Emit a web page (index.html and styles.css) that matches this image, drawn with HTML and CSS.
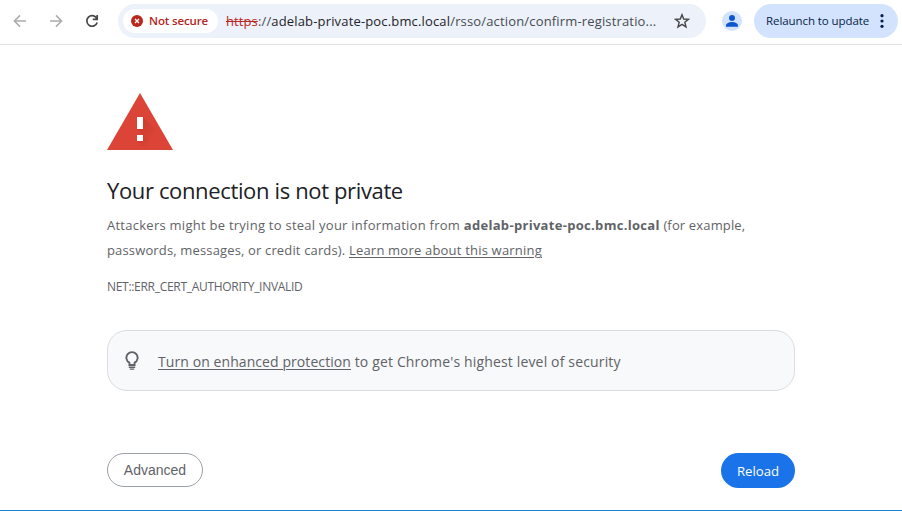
FILE: index.html
```html
<!DOCTYPE html>
<html lang="en">
<head>
<meta charset="utf-8">
<title>Privacy error</title>
<link rel="stylesheet" href="styles.css">
</head>
<body>
<header class="toolbar">
  <nav class="nav">
    <svg class="nav-icon muted" viewBox="0 0 16 16"><path d="M14 8H2.6M8 2.4 2.4 8 8 13.6"/></svg>
    <svg class="nav-icon muted" viewBox="0 0 16 16"><path d="M2 8h11.4M8 2.4 13.6 8 8 13.6"/></svg>
    <svg class="nav-icon" viewBox="0 0 16 16"><path d="M12.7 5.2A5.3 5.3 0 1 0 13.2 9.5M13.2 1.9v4.4H8.8"/></svg>
  </nav>
  <div class="omnibox">
    <span class="chip">
      <svg class="chip-icon" viewBox="0 0 12 12"><circle cx="6" cy="6" r="6"/><path d="m4 4 4 4M8 4 4 8"/></svg>
      <span>Not secure</span>
    </span>
    <span class="url"><span class="scheme">https</span><span class="rest">://<span class="host">adelab-private-poc.bmc.local</span>/rsso/action/confirm-registratio...</span></span>
    <svg class="star" viewBox="0 0 16 16"><path d="m8 1.7 1.7 4.3 4.7.3-3.6 3 1.2 4.6L8 11.4l-4 2.5 1.2-4.6-3.6-3 4.7-.3z"/></svg>
  </div>
  <span class="avatar"><svg viewBox="0 0 20 20"><circle cx="10" cy="7" r="3"/><path d="M4 15.8v-1.3c0-2.3 3.2-3.5 6-3.5s6 1.2 6 3.5v1.3z"/></svg></span>
  <button class="relaunch"><span>Relaunch to update</span>
    <svg viewBox="0 0 4 14"><circle cx="2" cy="1.7" r="1.6"/><circle cx="2" cy="7" r="1.6"/><circle cx="2" cy="12.3" r="1.6"/></svg>
  </button>
</header>
<main class="page">
  <svg class="warning" viewBox="0 0 66 57">
    <defs>
      <linearGradient id="shade" x1="0" y1="0" x2="1" y2="1"><stop offset="0" stop-color="#a52714" stop-opacity=".38"/><stop offset=".6" stop-color="#a52714" stop-opacity="0"/></linearGradient>
      <clipPath id="tri"><path d="M33 0 66 57H0z"/></clipPath>
    </defs>
    <path fill="#db4437" d="M33 0 66 57H0z"/>
    <g clip-path="url(#tri)" fill="url(#shade)"><path d="m36 24 22 22v11H51L30 36z"/><path d="m36 42 15 15H39l-9-9z"/></g>
    <path fill="#fff" d="M30 24h6v12h-6zM30 42h6v6h-6z"/>
  </svg>
  <h1>Your connection is not private</h1>
  <p class="message"><span class="lead">Attackers might be trying to steal your information from</span> <strong>adelab-private-poc.bmc.local</strong> <span class="aside">(for example,</span><br><span class="aside">passwords, messages, or credit cards).</span> <a href="#">Learn more about this warning</a></p>
  <p class="code">NET::ERR_CERT_AUTHORITY_INVALID</p>
  <section class="tip">
    <svg viewBox="0 0 14 20"><path class="bulb" d="M4.4 14v-2.3A5.6 5.6 0 1 1 9.6 11.7v2.3z"/><path class="base" d="M3.8 15.6h6.4v1.3H3.8zM4.8 17.6h4.4v1.2H4.8z"/></svg>
    <p><a href="#">Turn on enhanced protection</a> <span>to get Chrome's highest level of security</span></p>
  </section>
  <div class="actions">
    <button class="advanced">Advanced</button>
    <button class="reload">Reload</button>
  </div>
</main>
</body>
</html>
```
FILE: styles.css
```css
* { box-sizing: border-box; }

body {
  margin: 0;
  height: 511px;
  display: flex;
  flex-direction: column;
  overflow: hidden;
  background: #fff;
  border-bottom: 1px solid #1583d0;
  font-family: "Open Sans", sans-serif;
  color: #5f6368;
}

button { border: 0; padding: 0; font-family: inherit; }
h1, p { margin: 0; white-space: nowrap; }
svg { display: block; flex: none; }
a { color: inherit; text-underline-offset: 2px; text-decoration-thickness: 1px; }

.toolbar {
  height: 45px;
  flex: none;
  display: flex;
  align-items: center;
  padding: 0 4px 3px 12px;
  border-bottom: 1px solid #dfe1e3;
}

.nav { display: flex; gap: 20px; }
.nav-icon { width: 16px; height: 16px; fill: none; stroke: #474747; stroke-width: 1.7; }
.nav-icon.muted { stroke: #ababab; stroke-width: 1.5; }

.omnibox {
  width: 588px;
  height: 34px;
  margin-left: 18px;
  padding: 0 16px 0 5px;
  display: flex;
  align-items: center;
  border-radius: 17px;
  background: #ecf1fa;
}

.chip {
  width: 95px;
  height: 24px;
  padding-left: 8px;
  display: flex;
  align-items: center;
  gap: 6px;
  border-radius: 12px;
  background: #fff;
  color: #b3261e;
  font-size: 11.5px;
  font-weight: 600;
  letter-spacing: -.13px;
  white-space: nowrap;
}
.chip-icon { width: 12px; height: 12px; fill: #b9281f; stroke: #fff; stroke-width: 1.3; }
.chip-icon circle { stroke: none; }

.url { margin-left: 8px; font-size: 13px; white-space: nowrap; color: #474b50; }
.scheme { color: #b9281f; letter-spacing: .1px; text-decoration: line-through; }
.rest { letter-spacing: .16px; }
.host { color: #1f2328; }

.star { width: 16px; height: 16px; margin-left: auto; fill: none; stroke: #474747; stroke-width: 1.4; }

.avatar {
  width: 20px;
  height: 20px;
  margin-left: 16px;
  border-radius: 50%;
  background: #d3e3fd;
}
.avatar svg { width: 20px; height: 20px; fill: #0b57d0; }

.relaunch {
  width: 144px;
  height: 34px;
  margin-left: 12px;
  padding: 0 14px 0 12px;
  display: flex;
  align-items: center;
  justify-content: space-between;
  border-radius: 17px;
  background: #d3e3fd;
  color: #041e49;
  font-size: 11.5px;
  letter-spacing: -.08px;
  white-space: nowrap;
}
.relaunch svg { width: 4px; height: 14px; fill: #041e49; }

.page { width: 688px; margin-left: 107px; padding-top: 48px; }
.warning { width: 66px; height: 57px; }

h1 {
  margin-top: 25px;
  font-size: 22px;
  font-weight: 400;
  line-height: 30px;
  letter-spacing: -.36px;
  color: #202124;
}

.message { margin-top: 8px; font-size: 13px; line-height: 25px; letter-spacing: .2px; }
.message .lead { letter-spacing: .26px; }
.message strong { letter-spacing: .31px; }
.message .aside { letter-spacing: .15px; }

.code { margin-top: 15px; font-size: 12px; line-height: 18px; letter-spacing: -.3px; }

.tip {
  height: 61px;
  margin-top: 34px;
  padding-left: 17px;
  display: flex;
  align-items: center;
  gap: 19px;
  border: 1px solid #dadce0;
  border-radius: 20px;
  background: #f8f9fa;
  font-size: 14px;
}
.tip svg { width: 14px; height: 20px; }
.tip p { padding-top: 2px; }
.bulb { fill: none; stroke: #5f6368; stroke-width: 1.9; }
.base { fill: #5f6368; }
.tip a { letter-spacing: .08px; }
.tip span { letter-spacing: .156px; }

.actions { margin-top: 62px; display: flex; justify-content: space-between; }
.advanced {
  width: 96px;
  height: 34px;
  border: 1px solid #9aa0a6;
  border-radius: 17px;
  background: #fff;
  color: #5f6368;
  font: 14px "Liberation Sans", sans-serif;
}
.reload {
  width: 74px;
  height: 35px;
  border-radius: 17.5px;
  background: #1a73e8;
  color: #fff;
  font-size: 13.2px;
}
```
